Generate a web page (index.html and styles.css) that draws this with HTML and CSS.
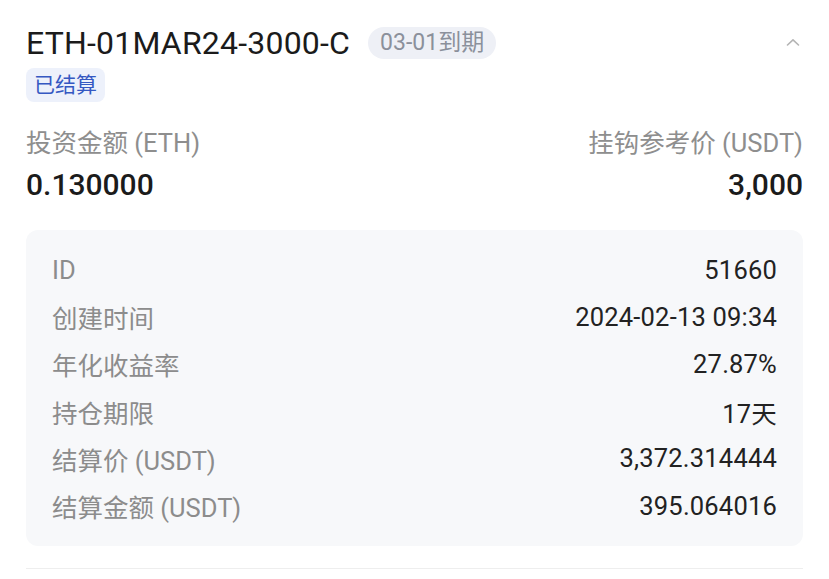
FILE: index.html
```html
<!DOCTYPE html>
<html lang="zh-CN">
<head>
<meta charset="utf-8">
<title>ETH-01MAR24-3000-C</title>
<link rel="stylesheet" href="styles.css">
</head>
<body>
<div class="card">
  <div class="head">
    <div class="head-main">
      <div class="title-row">
        <h1 class="title">ETH-01MAR24-3000-C</h1>
        <span class="expiry">03-01到期</span>
      </div>
      <span class="status">已结算</span>
    </div>
    <svg class="chevron" width="14" height="8" viewBox="0 0 14 8"><polyline points="1.5,7 7,1.8 12.5,7" fill="none" stroke="#b4b4b4" stroke-width="1.6" stroke-linecap="round" stroke-linejoin="round"/></svg>
  </div>

  <div class="summary">
    <div class="sum-col">
      <div class="sum-label">投资金额 (ETH)</div>
      <div class="sum-value">0.130000</div>
    </div>
    <div class="sum-col right">
      <div class="sum-label">挂钩参考价 (USDT)</div>
      <div class="sum-value">3,000</div>
    </div>
  </div>

  <div class="details">
    <div class="row"><span class="k">ID</span><span class="v">51660</span></div>
    <div class="row"><span class="k">创建时间</span><span class="v">2024-02-13 09:34</span></div>
    <div class="row"><span class="k">年化收益率</span><span class="v">27.87%</span></div>
    <div class="row"><span class="k">持仓期限</span><span class="v">17天</span></div>
    <div class="row"><span class="k">结算价 (USDT)</span><span class="v">3,372.314444</span></div>
    <div class="row"><span class="k">结算金额 (USDT)</span><span class="v">395.064016</span></div>
  </div>
  <div class="divider"></div>
</div>
</body>
</html>
```
FILE: styles.css
```css
* { box-sizing: border-box; }
html, body { margin: 0; padding: 0; background: #ffffff; }
body {
  font-family: Roboto, "Noto Sans CJK SC", sans-serif;
  color: #1c1c1e;
}
.card { padding: 27px 26px 0 26px; }
.head { display: flex; justify-content: space-between; align-items: flex-start; }
.head-main { display: flex; flex-direction: column; align-items: flex-start; gap: 9px; }
.title-row { display: flex; align-items: center; gap: 18px; height: 32px; }
.title {
  margin: 0;
  font-size: 32px;
  font-weight: 400;
  line-height: 32px;
  color: #1b1b1b;
  letter-spacing: 0.2px;
}
.expiry {
  display: inline-block;
  height: 32px;
  line-height: 32px;
  padding: 0 12px;
  border-radius: 16px;
  background: #eef0f6;
  color: #8b909b;
  font-size: 23px;
}
.status {
  display: inline-block;
  height: 34px;
  line-height: 34px;
  padding: 0 8px;
  border-radius: 8px;
  background: #edf1fb;
  color: #3558c2;
  font-size: 21px;
}
.chevron { margin-top: 11px; margin-right: 3px; }

.summary { display: flex; justify-content: space-between; margin-top: 26px; }
.sum-col { display: flex; flex-direction: column; }
.sum-col.right { align-items: flex-end; }
.sum-label { font-size: 25.5px; line-height: 30px; color: #8e8e8e; }
.sum-value { font-size: 30px; line-height: 36px; font-weight: 500; color: #1b1b1b; margin-top: 9px; }

.details {
  margin-top: 27px;
  background: #f7f8fa;
  border-radius: 12px;
  padding: 16px 26px 17px;
}
.row { display: flex; justify-content: space-between; align-items: center; height: 47.2px; font-size: 25.5px; }
.k { color: #8c8c8c; }
.v { color: #222222; letter-spacing: 0.2px; }
.divider { margin-top: 22px; height: 1px; background: #eeeeee; }
```
